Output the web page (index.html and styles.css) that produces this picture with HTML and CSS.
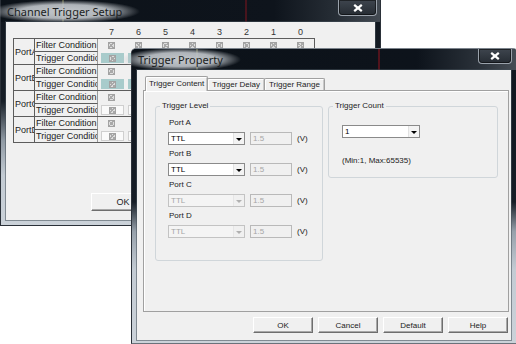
FILE: index.html
```html
<!DOCTYPE html>
<html>
<head>
<meta charset="utf-8">
<title>Trigger Property</title>
<link rel="stylesheet" href="styles.css">
</head>
<body>
<div class="desk">
  <div class="win back">
    <div class="titlebar">
      <span class="ttl">Channel Trigger Setup</span>
      <span class="close"><svg width="10" height="8" viewBox="0 0 10 8"><path d="M1.2 0.8 L8.8 7.2 M8.8 0.8 L1.2 7.2" stroke="#fff" stroke-width="2.2" fill="none"/></svg></span>
    </div>
    <div class="client cts">
      <div class="bits"><span>7</span><span>6</span><span>5</span><span>4</span><span>3</span><span>2</span><span>1</span><span>0</span></div>
      <div class="tbl">
        <div class="port">
          <div class="pname">PortA</div>
          <div class="lbl f">Filter Condition</div>
          <div class="cells"><span class="c"><i class="ck"></i></span><span class="c"><i class="ck"></i></span><span class="c"><i class="ck"></i></span><span class="c"><i class="ck"></i></span><span class="c"><i class="ck"></i></span><span class="c"><i class="ck"></i></span><span class="c"><i class="ck"></i></span><span class="c"><i class="ck"></i></span></div>
          <div class="lbl">Trigger Condition</div>
          <div class="cells teal"><span class="c"><b class="bx"><i class="ck"></i></b></span><span class="c"><b class="bx"><i class="ck"></i></b></span><span class="c"><b class="bx"><i class="ck"></i></b></span><span class="c"><b class="bx"><i class="ck"></i></b></span><span class="c"><b class="bx"><i class="ck"></i></b></span><span class="c"><b class="bx"><i class="ck"></i></b></span><span class="c"><b class="bx"><i class="ck"></i></b></span><span class="c"><b class="bx"><i class="ck"></i></b></span></div>
        </div>
        <div class="port">
          <div class="pname">PortB</div>
          <div class="lbl f">Filter Condition</div>
          <div class="cells"><span class="c"><i class="ck"></i></span><span class="c"><i class="ck"></i></span><span class="c"><i class="ck"></i></span><span class="c"><i class="ck"></i></span><span class="c"><i class="ck"></i></span><span class="c"><i class="ck"></i></span><span class="c"><i class="ck"></i></span><span class="c"><i class="ck"></i></span></div>
          <div class="lbl">Trigger Condition</div>
          <div class="cells teal"><span class="c"><b class="bx"><i class="ck"></i></b></span><span class="c"><b class="bx"><i class="ck"></i></b></span><span class="c"><b class="bx"><i class="ck"></i></b></span><span class="c"><b class="bx"><i class="ck"></i></b></span><span class="c"><b class="bx"><i class="ck"></i></b></span><span class="c"><b class="bx"><i class="ck"></i></b></span><span class="c"><b class="bx"><i class="ck"></i></b></span><span class="c"><b class="bx"><i class="ck"></i></b></span></div>
        </div>
        <div class="port">
          <div class="pname">PortC</div>
          <div class="lbl f">Filter Condition</div>
          <div class="cells"><span class="c"><i class="ck"></i></span><span class="c"><i class="ck"></i></span><span class="c"><i class="ck"></i></span><span class="c"><i class="ck"></i></span><span class="c"><i class="ck"></i></span><span class="c"><i class="ck"></i></span><span class="c"><i class="ck"></i></span><span class="c"><i class="ck"></i></span></div>
          <div class="lbl">Trigger Condition</div>
          <div class="cells wht"><span class="c"><b class="bx"><i class="ck"></i></b></span><span class="c"><b class="bx"><i class="ck"></i></b></span><span class="c"><b class="bx"><i class="ck"></i></b></span><span class="c"><b class="bx"><i class="ck"></i></b></span><span class="c"><b class="bx"><i class="ck"></i></b></span><span class="c"><b class="bx"><i class="ck"></i></b></span><span class="c"><b class="bx"><i class="ck"></i></b></span><span class="c"><b class="bx"><i class="ck"></i></b></span></div>
        </div>
        <div class="port">
          <div class="pname">PortD</div>
          <div class="lbl f">Filter Condition</div>
          <div class="cells"><span class="c"><i class="ck"></i></span><span class="c"><i class="ck"></i></span><span class="c"><i class="ck"></i></span><span class="c"><i class="ck"></i></span><span class="c"><i class="ck"></i></span><span class="c"><i class="ck"></i></span><span class="c"><i class="ck"></i></span><span class="c"><i class="ck"></i></span></div>
          <div class="lbl">Trigger Condition</div>
          <div class="cells wht"><span class="c"><b class="bx"><i class="ck"></i></b></span><span class="c"><b class="bx"><i class="ck"></i></b></span><span class="c"><b class="bx"><i class="ck"></i></b></span><span class="c"><b class="bx"><i class="ck"></i></b></span><span class="c"><b class="bx"><i class="ck"></i></b></span><span class="c"><b class="bx"><i class="ck"></i></b></span><span class="c"><b class="bx"><i class="ck"></i></b></span><span class="c"><b class="bx"><i class="ck"></i></b></span></div>
        </div>
      </div>
      <div class="okrow"><button class="btn big">OK</button></div>
    </div>
  </div>

  <div class="win front">
    <div class="titlebar">
      <span class="ttl">Trigger Property</span>
      <span class="close"><svg width="10" height="8" viewBox="0 0 10 8"><path d="M1.2 0.8 L8.8 7.2 M8.8 0.8 L1.2 7.2" stroke="#fff" stroke-width="2.2" fill="none"/></svg></span>
    </div>
    <div class="client dlg">
      <div class="tabs">
        <span class="tab on">Trigger Content</span>
        <span class="tab">Trigger Delay</span>
        <span class="tab">Trigger Range</span>
      </div>
      <div class="pane">
        <fieldset class="grp lvl">
          <legend>Trigger Level</legend>
          <div class="ports">
            <div class="prt">
              <div class="plbl">Port A</div>
              <div class="ctl">
                <div class="sel"><span>TTL</span><i class="arr"></i></div>
                <div class="txt">1.5</div>
                <span class="unit">(V)</span>
              </div>
            </div>
            <div class="prt">
              <div class="plbl">Port B</div>
              <div class="ctl">
                <div class="sel"><span>TTL</span><i class="arr"></i></div>
                <div class="txt">1.5</div>
                <span class="unit">(V)</span>
              </div>
            </div>
            <div class="prt">
              <div class="plbl">Port C</div>
              <div class="ctl">
                <div class="sel off"><span>TTL</span><i class="arr"></i></div>
                <div class="txt">1.5</div>
                <span class="unit">(V)</span>
              </div>
            </div>
            <div class="prt">
              <div class="plbl">Port D</div>
              <div class="ctl">
                <div class="sel off"><span>TTL</span><i class="arr"></i></div>
                <div class="txt">1.5</div>
                <span class="unit">(V)</span>
              </div>
            </div>
          </div>
        </fieldset>
        <fieldset class="grp cnt">
          <legend>Trigger Count</legend>
          <div class="cntbody">
            <div class="sel wide"><span>1</span><i class="arr"></i></div>
            <div class="range">(Min:1, Max:65535)</div>
          </div>
        </fieldset>
      </div>
      <div class="btns">
        <button class="btn">OK</button>
        <button class="btn">Cancel</button>
        <button class="btn">Default</button>
        <button class="btn">Help</button>
      </div>
    </div>
  </div>
</div>
</body>
</html>
```

FILE: styles.css
```css
* { box-sizing: border-box; }
html, body { margin: 0; padding: 0; background: #fff; }
body { font-family: "Liberation Sans", Arial, sans-serif; color: #222; }

.desk {
  position: relative;
  width: 516px;
  height: 344px;
  overflow: hidden;
  background: #fff;
}

/* ---------- windows ---------- */
.win {
  position: absolute;
  display: flex;
  flex-direction: column;
  border: 1px solid #2b3139;
}
.win.back {
  left: 0; top: 0; width: 381px; height: 226px;
  border-top: none;
  background: linear-gradient(to bottom, #10161e 0, #171e27 45%, #8e98a2 62%, #c3cbd3 78%, #cbd2d9 100%);
}
.win.front {
  left: 131px; top: 48px; width: 387px; height: 296px;
  border-color: #7b838c #2b3139 #6a727a #2b3139;
  border-radius: 5px 5px 0 0;
  background: linear-gradient(to bottom, #10161e 0, #161d26 52%, #96a0aa 62%, #c3cbd3 75%, #cbd2d9 100%);
}

.titlebar {
  flex: 0 0 21px;
  display: flex;
  align-items: center;
  justify-content: space-between;
  padding-left: 6px;
}
.back .titlebar {
  flex-basis: 22px;
  background:
    linear-gradient(to right, transparent 61px, rgba(190,190,110,.35) 61px, rgba(190,190,110,.35) 63px, transparent 63px),
    linear-gradient(to right, transparent 244px, rgba(140,20,30,.45) 244px, rgba(140,20,30,.45) 246px, transparent 246px),
    linear-gradient(to right, #0c1219 0, #0e141c 72%, #262d35 88%, #434a52 100%);
}
.front .titlebar {
  background:
    linear-gradient(to right, transparent 64px, rgba(200,200,120,.35) 64px, rgba(200,200,120,.35) 66px, transparent 66px),
    linear-gradient(to right, transparent 246px, rgba(150,20,30,.5) 246px, rgba(150,20,30,.5) 248px, transparent 248px),
    linear-gradient(to right, #0c1219 0, #0d131b 74%, #2a3139 90%, #474e56 100%);
  border-radius: 4px 4px 0 0;
}

.ttl {
  font-family: "Noto Sans", "Open Sans", sans-serif;
  font-size: 11px;
  line-height: 15px;
  color: #1b1e22;
  padding: 4px 18px;
  margin: -4px 0 -4px -18px;
  background: radial-gradient(closest-side, rgba(200,204,208,.97) 0, rgba(192,197,202,.9) 60%, rgba(180,185,190,0) 100%);
  white-space: nowrap;
}

.close {
  align-self: flex-start;
  display: flex;
  align-items: center;
  justify-content: center;
  border: 1px solid #9aa2ab;
  border-top: none;
  border-radius: 0 0 4px 4px;
  background: linear-gradient(to bottom, #3e454e, #262c33);
  box-shadow: inset 0 0 0 1px rgba(0,0,0,.5);
}
.back .close { width: 39px; height: 16px; margin-right: 3px; }
.front .close { width: 34px; height: 15px; margin-right: 5px; }
.close svg { display: block; }

.client {
  flex: 1;
  background: #f0f0f0;
  box-shadow: 0 0 0 1px rgba(70,80,90,.55);
}
.back .client { margin: 0 5px 5px 5px; }
.front .client { margin: 0 6px 3px 5px; }

/* ---------- Channel Trigger Setup ---------- */
.cts {
  padding: 4px 0 0 7px;
  font-size: 9px;
}
.bits {
  display: grid;
  grid-template-columns: repeat(8, 27px);
  margin-left: 85px;
  height: 12px;
  line-height: 12px;
  text-align: center;
  color: #333;
}
.tbl {
  width: 302px;
  border: 1px solid #5c5c5c;
}
.port {
  display: grid;
  grid-template-columns: 21px 63px 216px;
  grid-template-rows: 13px 12px;
  border-bottom: 1px solid #5c5c5c;
}
.port:last-child { border-bottom: none; }
.pname {
  grid-row: span 2;
  border-right: 1px solid #5c5c5c;
  overflow: hidden;
  white-space: nowrap;
  display: flex;
  align-items: center;
  padding-left: 1px;
}
.lbl {
  border-right: 1px solid #9a9a9a;
  overflow: hidden;
  white-space: nowrap;
  padding-left: 1px;
  line-height: 12px;
}
.lbl.f { border-bottom: 1px solid #5c5c5c; }
.cells {
  display: grid;
  grid-template-columns: repeat(8, 27px);
}
.c {
  display: flex;
  align-items: center;
  justify-content: center;
}
.ck {
  display: block;
  width: 7px;
  height: 7px;
  border: 1px solid #a2a2a2;
  background:
    linear-gradient(45deg, transparent 40%, #a9a9a9 40%, #a9a9a9 60%, transparent 60%),
    linear-gradient(-45deg, transparent 40%, #a9a9a9 40%, #a9a9a9 60%, transparent 60%),
    #dedede;
}
.bx {
  display: flex;
  align-items: center;
  justify-content: center;
  width: 23px;
  height: 10px;
  margin-left: 2px;
}
.teal .bx { background: #a8cbcb; }
.wht .bx { background: #fafafa; border: 1px solid #cfcfcf; }

.okrow { margin: 50px 0 0 78px; }

.btn {
  font-family: "Liberation Sans", Arial, sans-serif;
  font-size: 8px;
  color: #222;
  width: 60px;
  height: 16px;
  padding: 0;
  background: #f0f0f0;
  border: 1px solid;
  border-color: #fff #6e6e6e #6e6e6e #fff;
  box-shadow: inset -1px -1px 0 #a8a8a8;
}
.btn.big { width: 64px; height: 18px; font-size: 9px; }

/* ---------- Trigger Property dialog ---------- */
.dlg {
  display: flex;
  flex-direction: column;
  padding: 6px 2px 7px 6px;
  font-size: 8px;
}
.tabs {
  display: flex;
  align-items: flex-end;
  height: 15px;
  margin: 0 0 -1px 2px;
  position: relative;
}
.tab {
  height: 12px;
  margin-bottom: 1px;
  padding: 0 4px;
  line-height: 11px;
  white-space: nowrap;
  background: #f0f0f0;
  border: 1px solid #a0a0a0;
  border-bottom: none;
  border-radius: 2px 2px 0 0;
  box-shadow: inset 1px 1px 0 #fff, inset -1px 0 0 #c8c8c8;
}
.tab.on {
  height: 15px;
  margin-bottom: 0;
  padding: 0 3px;
  line-height: 13px;
}
.tab + .tab { margin-left: -1px; }

.pane {
  flex: 1;
  display: flex;
  align-items: flex-start;
  gap: 5px;
  padding: 10px 0 0 11px;
  border: 1px solid #a0a0a0;
  box-shadow: inset 1px 1px 0 #fff;
}

.grp {
  margin: 0;
  padding: 0;
  min-width: 0;
  border: 1px solid #d0d6da;
  border-radius: 3px;
}
.grp legend {
  margin-left: 4px;
  padding: 0 2px;
  font-size: 8px;
  line-height: 10px;
}
.lvl { width: 168px; }
.cnt { width: 170px; }

.ports {
  display: flex;
  flex-direction: column;
  gap: 4px;
  padding: 7px 0 22px 12px;
}
.prt {
  display: flex;
  flex-direction: column;
  gap: 4px;
}
.plbl {
  line-height: 10px;
  padding-left: 1px;
}
.ctl {
  display: flex;
  align-items: center;
  height: 13px;
}
.sel {
  display: flex;
  align-items: center;
  width: 77px;
  height: 13px;
  padding-left: 2px;
  background: #fff;
  border: 1px solid #8a8a8a;
  line-height: 11px;
  color: #000;
}
.sel span { flex: 1; }
.arr {
  flex: 0 0 11px;
  height: 11px;
  background: #f3f3f3;
  border-left: 1px solid #e2e2e2;
  display: flex;
  align-items: center;
  justify-content: center;
}
.arr::after {
  content: "";
  border-left: 3px solid transparent;
  border-right: 3px solid transparent;
  border-top: 3px solid #000;
  margin-top: 1px;
}
.sel.off {
  background: #f4f4f4;
  border-color: #c3c3c3;
  color: #a6a6a6;
}
.sel.off .arr { background: #f0f0f0; border-left-color: #e6e6e6; }
.sel.off .arr::after { border-top-color: #b0b0b0; }
.txt {
  width: 42px;
  height: 13px;
  margin-left: 5px;
  padding-left: 2px;
  line-height: 11px;
  background: #f0f0f0;
  border: 1px solid #b9b9b9;
  color: #a6a6a6;
}
.unit { margin-left: 5px; }

.cntbody { padding: 14px 0 11px 13px; }
.sel.wide { width: 78px; }
.range {
  margin-top: 18px;
  line-height: 10px;
}

.btns {
  display: flex;
  justify-content: flex-end;
  gap: 5px;
  margin-top: 5px;
  padding-right: 1px;
}
```
